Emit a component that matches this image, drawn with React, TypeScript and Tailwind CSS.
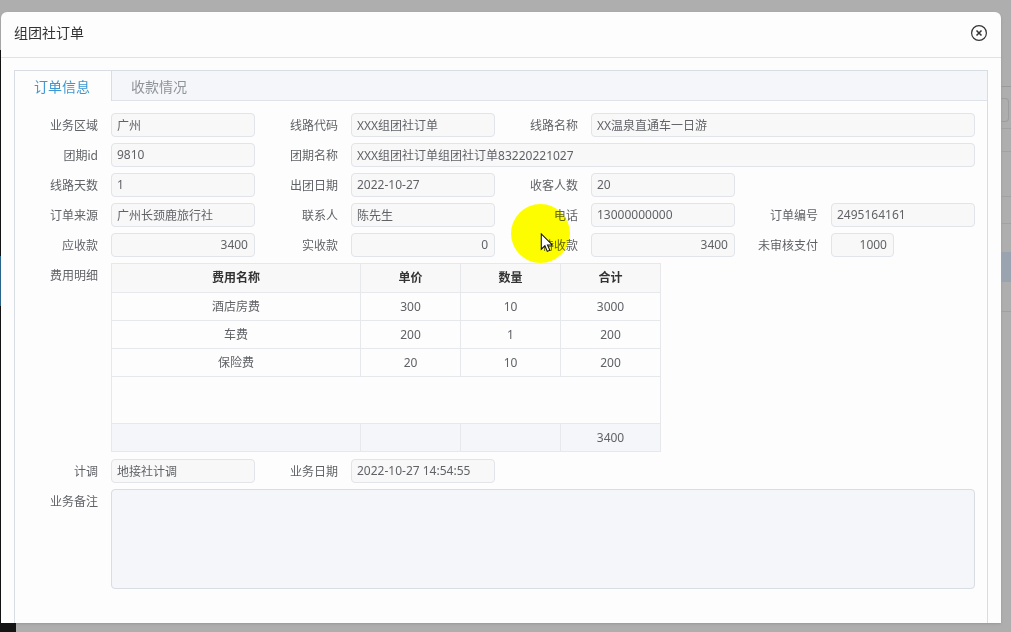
import { useState } from "react";
import type { ReactNode } from "react";
import clsx from "clsx";

type FieldProps = {
	id: string;
	label: string;
	value: string;
	span?: string;
	alignRight?: boolean;
	narrow?: boolean;
	children?: ReactNode;
};

const fees = [
	{ name: "酒店房费", price: 300, count: 10, total: 3000 },
	{ name: "车费", price: 200, count: 1, total: 200 },
	{ name: "保险费", price: 20, count: 10, total: 200 },
];

const tabs = ["订单信息", "收款情况"];

const labelClass = "w-24 shrink-0 pr-[13px] text-right leading-[26px]";
const cell = "border border-[#e6e8ec] text-center";

const Field = ({ id, label, value, span, alignRight, narrow, children }: FieldProps) => (
	<div className={clsx("relative flex h-6", span)}>
		<label htmlFor={id} className={labelClass}>
			{label}
		</label>
		<input
			id={id}
			type="text"
			readOnly
			defaultValue={value}
			className={clsx(
				"h-6 min-w-0 rounded border border-[#e1e4e9] bg-[#f8f8f9] pr-1.5 pb-px pl-[5px] outline-none",
				narrow ? "w-[63px]" : "flex-1",
				alignRight && "text-right",
			)}
		/>
		{children}
	</div>
);

const Pointer = () => (
	<>
		<span className="pointer-events-none absolute -top-[29px] left-4 size-[59px] rounded-full bg-[#ffff00] mix-blend-multiply" />
		<svg
			viewBox="0 0 14 21"
			className="pointer-events-none absolute top-0 left-11 h-5 w-4"
			aria-hidden="true"
		>
			<path
				d="M1 1v16l3.8-3.6 2.5 5.9 2.7-1.1-2.5-5.7h5.1z"
				fill="#fff"
				stroke="#111"
				strokeWidth="1.1"
			/>
		</svg>
	</>
);

const FeeTable = () => (
	<table
		aria-labelledby="fee-label"
		className="w-full max-w-[550px] table-fixed border-collapse"
	>
		<colgroup>
			<col />
			<col className="w-[100px]" />
			<col className="w-[100px]" />
			<col className="w-[100px]" />
		</colgroup>
		<thead>
			<tr className="h-[29px] bg-[#f8f8f9] text-[#333]">
				<th className={cell}>费用名称</th>
				<th className={cell}>单价</th>
				<th className={cell}>数量</th>
				<th className={cell}>合计</th>
			</tr>
		</thead>
		<tbody>
			{fees.map((fee) => (
				<tr key={fee.name} className="h-7">
					<td className={cell}>{fee.name}</td>
					<td className={cell}>{fee.price}</td>
					<td className={cell}>{fee.count}</td>
					<td className={cell}>{fee.total}</td>
				</tr>
			))}
			<tr className="h-[47px]">
				<td colSpan={4} className={cell} />
			</tr>
		</tbody>
		<tfoot>
			<tr className="h-7 bg-[#f4f6fa]">
				<td className={cell} />
				<td className={cell} />
				<td className={cell} />
				<td className={cell}>3400</td>
			</tr>
		</tfoot>
	</table>
);

const OrderForm = () => (
	<form className="grid grid-cols-4 gap-y-1.5 pt-3 pr-3">
		<Field id="area" label="业务区域" value="广州" />
		<Field id="line-code" label="线路代码" value="XXX组团社订单" />
		<Field id="line-name" label="线路名称" value="XX温泉直通车一日游" span="col-span-2" />

		<Field id="group-id" label="团期id" value="9810" />
		<Field
			id="group-name"
			label="团期名称"
			value="XXX组团社订单组团社订单83220221027"
			span="col-span-3"
		/>

		<Field id="days" label="线路天数" value="1" />
		<Field id="start-date" label="出团日期" value="2022-10-27" />
		<Field id="guests" label="收客人数" value="20" span="col-span-2 w-1/2" />

		<Field id="source" label="订单来源" value="广州长颈鹿旅行社" />
		<Field id="contact" label="联系人" value="陈先生" />
		<Field id="phone" label="电话" value="13000000000" />
		<Field id="order-no" label="订单编号" value="2495164161" />

		<Field id="receivable" label="应收款" value="3400" alignRight />
		<Field id="received" label="实收款" value="0" alignRight />
		<Field id="pending" label="待收款" value="3400" alignRight>
			<Pointer />
		</Field>
		<Field id="unaudited" label="未审核支付" value="1000" alignRight narrow />

		<div className="col-span-4 flex pb-px">
			<span id="fee-label" className={labelClass}>
				费用明细
			</span>
			<FeeTable />
		</div>

		<Field id="planner" label="计调" value="地接社计调" />
		<Field
			id="biz-date"
			label="业务日期"
			value="2022-10-27 14:54:55"
			span="col-span-3 w-1/3"
		/>

		<div className="col-span-4 flex">
			<label htmlFor="remark" className={labelClass}>
				业务备注
			</label>
			<textarea
				id="remark"
				readOnly
				className="h-25 flex-1 resize-none rounded border border-[#d8dce3] bg-[#f4f6fa] p-1.5 outline-none"
			/>
		</div>
	</form>
);

const App = () => {
	const [active, setActive] = useState(tabs[0]);

	return (
		<div className="flex min-h-screen flex-col bg-[#aeaeae] pt-3 font-['Noto_Sans','Noto_Sans_CJK_SC',sans-serif] text-xs text-[#606266]">
			<div className="flex flex-1">
				{/* Edge of the page behind the dialog, left */}
				<div className="flex w-px shrink-0 flex-col">
					<div className="h-[38px]" />
					<div className="h-[206px] bg-[#141414]" />
					<div className="h-[50px] bg-[#2c6a91]" />
					<div className="flex-1 bg-[#141414]" />
				</div>

				<div
					role="dialog"
					aria-labelledby="dialog-title"
					className="flex min-w-0 flex-1 flex-col rounded-t-md bg-[#fdfdfd] shadow-sm"
				>
					<header className="flex h-[46px] items-center justify-between border-b border-[#e2e2e2] pr-3 pl-[13px]">
						<h1 id="dialog-title" className="pb-1 text-sm text-[#333]">
							组团社订单
						</h1>
						<button type="button" aria-label="关闭" className="mb-1">
							<svg viewBox="0 0 20 20" className="size-5" fill="none" stroke="#333">
								<circle cx="10" cy="10" r="7.4" strokeWidth="1.2" />
								<path d="M7.5 7.5l5 5M12.5 7.5l-5 5" strokeWidth="1.5" />
							</svg>
						</button>
					</header>

					<section className="mx-[13px] mt-3 flex-1 border border-b-0 border-[#d8dce3] pb-8">
						<div role="tablist" className="flex h-[30px] bg-[#f4f6fa]">
							{tabs.map((tab) => (
								<button
									key={tab}
									type="button"
									role="tab"
									aria-selected={active === tab}
									onClick={() => setActive(tab)}
									className={clsx(
										"pt-0.5 pr-[21px] pl-[19px] text-sm",
										active === tab
											? "border-r border-[#d8dce3] bg-[#fdfdfd] text-[#3e97cf]"
											: "border-b border-[#dfe3e9] text-[#909399]",
									)}
								>
									{tab}
								</button>
							))}
							<div className="flex-1 border-b border-[#dfe3e9]" />
						</div>
						<OrderForm />
					</section>
				</div>

				{/* Edge of the page behind the dialog, right */}
				<div className="flex w-2.5 shrink-0 flex-col">
					<div className="h-[74px]" />
					<div className="h-3 border-t border-[#9b9b9b]" />
					<div className="mr-0.5 h-6 rounded-r border border-l-0 border-[#9d9d9d]" />
					<div className="mt-1.5 h-6 border-y border-[#a2a2a2]" />
					<div className="h-11" />
					<div className="h-7 border-y border-[#a2a2a2]" />
					<div className="h-7" />
					<div className="h-[30px] bg-[#9aa3b0]" />
					<div className="h-[30px] border-b border-[#a0a0a0]" />
				</div>
			</div>
			<div className="h-[9px]">
				<div className="h-full w-4 bg-[#141414]" />
			</div>
		</div>
	);
};

export default App;
